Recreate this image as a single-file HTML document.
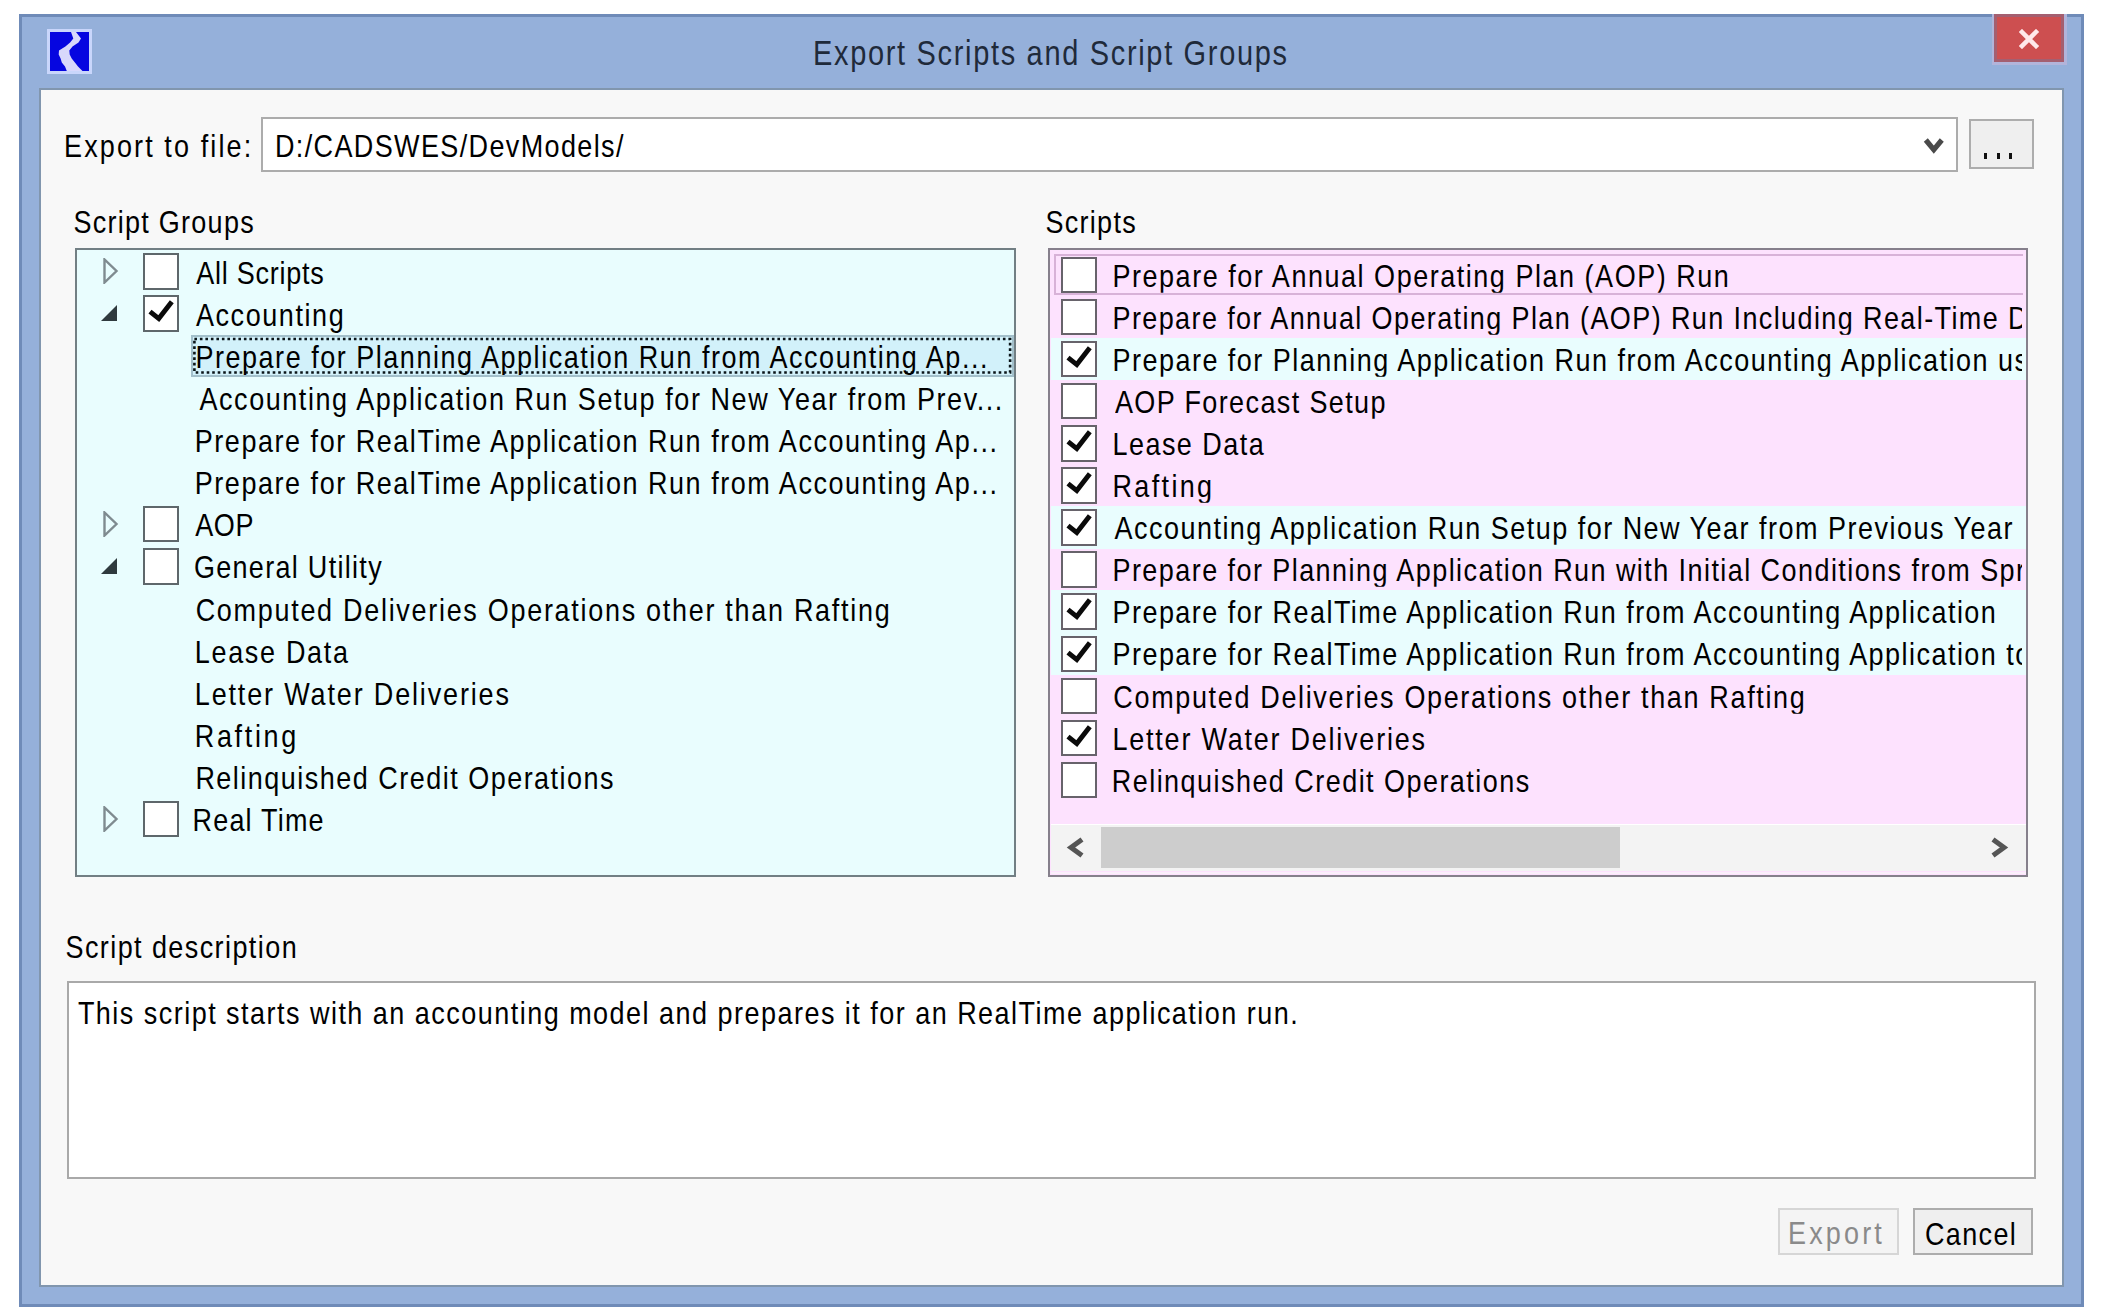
<!DOCTYPE html>
<html><head><meta charset="utf-8"><title>Export Scripts and Script Groups</title>
<style>
html,body{margin:0;padding:0;background:#ffffff;}
body{width:2104px;height:1313px;position:relative;overflow:hidden;font-family:"Liberation Sans", sans-serif;}
.a{position:absolute;}
.t{position:absolute;white-space:nowrap;font-family:"Liberation Sans", sans-serif;}
</style></head><body>
<div class="a" style="left:19.0px;top:14.0px;width:2065.0px;height:1293.0px;background:#95b0da;border:3px solid #6f8bb8;box-sizing:border-box;"></div>
<div class="a" style="left:47.0px;top:29.0px;width:45.0px;height:45.0px;background:#c9d6fb;"></div>
<div class="a" style="left:50.0px;top:31.5px;width:39.0px;height:39.5px;background:#0606e0;"></div>
<svg class="a" style="left:50px;top:31.5px" width="39" height="39.5" viewBox="0 0 39 39.5"><path d="M21 0 L26 0 L31 6.5 L28.5 10.5 L22.5 14.5 L19.3 18.5 L19.7 22.5 L21.7 26.5 L24.9 30.5 L28 34.5 L33 39.5 L17 39.5 L15 34.5 L11.8 30.5 L10.6 26.5 L8.7 22.5 L9 18.5 L15.4 14.5 L20.1 10.5 L23.3 6.5 Z" fill="#d8d8fb"/></svg>
<div class="t" style="left:813.02px;top:40.75px;font-size:29px;line-height:29px;color:#1f2a3a;letter-spacing:1.669px;transform:scaleY(1.1929);transform-origin:0 24.55px;">Export Scripts and Script Groups</div>
<div class="a" style="left:1991.5px;top:14.0px;width:75.3px;height:50.5px;background:#b2b4da;"></div>
<div class="a" style="left:1994.0px;top:14.0px;width:70.2px;height:48.0px;background:#cd4f50;border:3px solid #a45f70;box-sizing:border-box;"></div>
<svg class="a" style="left:2019px;top:29px" width="20" height="20" viewBox="0 0 20 20"><path d="M3 3 L17 17 M17 3 L3 17" stroke="#ffe8ea" stroke-width="4.5" stroke-linecap="square"/></svg>
<div class="a" style="left:39.0px;top:88.0px;width:2025.0px;height:1199.0px;background:#f8f8f8;border:2.3px solid #8196ae;box-sizing:border-box;"></div>
<div class="t" style="left:64.09px;top:135.24px;font-size:27px;line-height:27px;color:#000;letter-spacing:2.107px;transform:scaleY(1.1843);transform-origin:0 22.86px;">Export to file:</div>
<div class="a" style="left:261.0px;top:116.5px;width:1696.5px;height:55.5px;background:#ffffff;border:2.5px solid #acacac;box-sizing:border-box;"></div>
<div class="t" style="left:274.99px;top:135.24px;font-size:27px;line-height:27px;color:#000;letter-spacing:1.367px;transform:scaleY(1.1843);transform-origin:0 22.86px;">D:/CADSWES/DevModels/</div>
<svg class="a" style="left:1923px;top:137px" width="22" height="19" viewBox="0 0 22 19"><path d="M2.8 3 L10.8 12.6 L18.8 3" stroke="#4a4a4a" stroke-width="5.2" fill="none"/></svg>
<div class="a" style="left:1969.0px;top:119.0px;width:64.5px;height:50.0px;background:#efefef;border:2.5px solid #adadad;box-sizing:border-box;"></div>
<div class="a" style="left:1984.0px;top:152.5px;width:3.0px;height:6.0px;background:#111;"></div>
<div class="a" style="left:1996.5px;top:152.5px;width:3.0px;height:6.0px;background:#111;"></div>
<div class="a" style="left:2009.0px;top:152.5px;width:3.0px;height:6.0px;background:#111;"></div>
<div class="t" style="left:73.57px;top:210.94px;font-size:27px;line-height:27px;color:#000;letter-spacing:1.253px;transform:scaleY(1.1843);transform-origin:0 22.86px;">Script Groups</div>
<div class="t" style="left:1045.57px;top:211.24px;font-size:27px;line-height:27px;color:#000;letter-spacing:1.262px;transform:scaleY(1.1843);transform-origin:0 22.86px;">Scripts</div>
<div class="a" style="left:75.0px;top:247.7px;width:941.0px;height:629.3px;background:#e9fdfe;border:2.5px solid #727f84;box-sizing:border-box;"></div>
<div class="a" style="left:190.5px;top:335.0px;width:823.2px;height:41.7px;background:#d2f1fa;border:2.5px solid #a3c0cb;box-sizing:border-box;"></div>
<svg class="a" style="left:190px;top:335px" width="824" height="42" viewBox="0 0 824 42"><rect x="4.4" y="4.05" width="815.7" height="33.5" fill="none" stroke="#0a1418" stroke-width="2.6" stroke-dasharray="2.6 2.9"/></svg>
<svg class="a" style="left:102px;top:258.3px" width="18" height="26" viewBox="0 0 18 26"><path d="M2.5 1.5 L2.5 24.5 L14.5 13 Z" stroke="#7f8b90" stroke-width="2.4" fill="none"/></svg>
<div class="a" style="left:142.8px;top:253.3px;width:36.0px;height:36.5px;background:#ffffff;border:2.6px solid #5e676b;box-sizing:border-box;"></div>
<div class="t" style="left:196.15px;top:261.74px;font-size:27px;line-height:27px;color:#000;letter-spacing:0.750px;transform:scaleY(1.1843);transform-origin:0 22.86px;">All Scripts</div>
<svg class="a" style="left:100px;top:303.9px" width="18" height="18" viewBox="0 0 18 18"><path d="M1 17 L17 17 L17 1 Z" fill="#2f3a3e"/></svg>
<div class="a" style="left:142.8px;top:295.4px;width:36.0px;height:36.5px;background:#ffffff;border:2.6px solid #5e676b;box-sizing:border-box;"></div>
<svg class="a" style="left:142.8px;top:295.4px" width="36" height="36" viewBox="0 0 36 36"><path d="M7 16.6 L15.8 23.6 L28.8 6.8" stroke="#0a0a0a" stroke-width="4.9" fill="none" stroke-linejoin="miter" stroke-linecap="butt"/></svg>
<div class="t" style="left:195.95px;top:303.84px;font-size:27px;line-height:27px;color:#000;letter-spacing:1.578px;transform:scaleY(1.1843);transform-origin:0 22.86px;">Accounting</div>
<div class="t" style="left:195.49px;top:345.94px;font-size:27px;line-height:27px;color:#000;letter-spacing:1.518px;transform:scaleY(1.1843);transform-origin:0 22.86px;">Prepare for Planning Application Run from Accounting Ap...</div>
<div class="t" style="left:199.45px;top:388.04px;font-size:27px;line-height:27px;color:#000;letter-spacing:1.562px;transform:scaleY(1.1843);transform-origin:0 22.86px;">Accounting Application Run Setup for New Year from Prev...</div>
<div class="t" style="left:194.79px;top:430.14px;font-size:27px;line-height:27px;color:#000;letter-spacing:1.532px;transform:scaleY(1.1843);transform-origin:0 22.86px;">Prepare for RealTime Application Run from Accounting Ap...</div>
<div class="t" style="left:194.79px;top:472.24px;font-size:27px;line-height:27px;color:#000;letter-spacing:1.532px;transform:scaleY(1.1843);transform-origin:0 22.86px;">Prepare for RealTime Application Run from Accounting Ap...</div>
<svg class="a" style="left:102px;top:510.9px" width="18" height="26" viewBox="0 0 18 26"><path d="M2.5 1.5 L2.5 24.5 L14.5 13 Z" stroke="#7f8b90" stroke-width="2.4" fill="none"/></svg>
<div class="a" style="left:142.8px;top:505.9px;width:36.0px;height:36.5px;background:#ffffff;border:2.6px solid #5e676b;box-sizing:border-box;"></div>
<div class="t" style="left:195.25px;top:514.34px;font-size:27px;line-height:27px;color:#000;letter-spacing:0.573px;transform:scaleY(1.1843);transform-origin:0 22.86px;">AOP</div>
<svg class="a" style="left:100px;top:556.5px" width="18" height="18" viewBox="0 0 18 18"><path d="M1 17 L17 17 L17 1 Z" fill="#2f3a3e"/></svg>
<div class="a" style="left:142.8px;top:548.0px;width:36.0px;height:36.5px;background:#ffffff;border:2.6px solid #5e676b;box-sizing:border-box;"></div>
<div class="t" style="left:193.94px;top:556.44px;font-size:27px;line-height:27px;color:#000;letter-spacing:1.296px;transform:scaleY(1.1843);transform-origin:0 22.86px;">General Utility</div>
<div class="t" style="left:195.63px;top:598.54px;font-size:27px;line-height:27px;color:#000;letter-spacing:1.702px;transform:scaleY(1.1843);transform-origin:0 22.86px;">Computed Deliveries Operations other than Rafting</div>
<div class="t" style="left:194.79px;top:640.64px;font-size:27px;line-height:27px;color:#000;letter-spacing:1.678px;transform:scaleY(1.1843);transform-origin:0 22.86px;">Lease Data</div>
<div class="t" style="left:194.79px;top:682.74px;font-size:27px;line-height:27px;color:#000;letter-spacing:1.845px;transform:scaleY(1.1843);transform-origin:0 22.86px;">Letter Water Deliveries</div>
<div class="t" style="left:194.79px;top:724.84px;font-size:27px;line-height:27px;color:#000;letter-spacing:2.649px;transform:scaleY(1.1843);transform-origin:0 22.86px;">Rafting</div>
<div class="t" style="left:195.39px;top:766.94px;font-size:27px;line-height:27px;color:#000;letter-spacing:1.482px;transform:scaleY(1.1843);transform-origin:0 22.86px;">Relinquished Credit Operations</div>
<svg class="a" style="left:102px;top:805.6px" width="18" height="26" viewBox="0 0 18 26"><path d="M2.5 1.5 L2.5 24.5 L14.5 13 Z" stroke="#7f8b90" stroke-width="2.4" fill="none"/></svg>
<div class="a" style="left:142.8px;top:800.6px;width:36.0px;height:36.5px;background:#ffffff;border:2.6px solid #5e676b;box-sizing:border-box;"></div>
<div class="t" style="left:192.49px;top:809.04px;font-size:27px;line-height:27px;color:#000;letter-spacing:1.196px;transform:scaleY(1.1843);transform-origin:0 22.86px;">Real Time</div>
<div class="a" style="left:1047.5px;top:248.0px;width:980.5px;height:629.0px;background:#fde2fe;border:2.6px solid #86808c;box-sizing:border-box;"></div>
<div class="a" style="left:1053.5px;top:253.6px;width:969.0px;height:41.1px;border:2.2px solid #d8b2d8;box-sizing:border-box;border-right:0;"></div>
<div class="a" style="left:1061.2px;top:256.6px;width:36.0px;height:36.5px;background:#ffffff;border:2.6px solid #67636b;box-sizing:border-box;"></div>
<div class="t" style="left:1112.49px;top:264.54px;font-size:27px;line-height:27px;color:#000;letter-spacing:1.525px;transform:scaleY(1.1843);transform-origin:0 22.86px;width:910.0px;overflow:hidden;">Prepare for Annual Operating Plan (AOP) Run</div>
<div class="a" style="left:1061.2px;top:298.7px;width:36.0px;height:36.5px;background:#ffffff;border:2.6px solid #67636b;box-sizing:border-box;"></div>
<div class="t" style="left:1112.49px;top:306.64px;font-size:27px;line-height:27px;color:#000;letter-spacing:1.392px;transform:scaleY(1.1843);transform-origin:0 22.86px;width:910.0px;overflow:hidden;">Prepare for Annual Operating Plan (AOP) Run Including Real-Time Data</div>
<div class="a" style="left:1050.5px;top:337.8px;width:975.0px;height:42.7px;background:#e9fdfe;"></div>
<div class="a" style="left:1061.2px;top:340.8px;width:36.0px;height:36.5px;background:#ffffff;border:2.6px solid #67636b;box-sizing:border-box;"></div>
<svg class="a" style="left:1061.2px;top:340.8px" width="36" height="36" viewBox="0 0 36 36"><path d="M7 16.6 L15.8 23.6 L28.8 6.8" stroke="#0a0a0a" stroke-width="4.9" fill="none" stroke-linejoin="miter" stroke-linecap="butt"/></svg>
<div class="t" style="left:1112.49px;top:348.74px;font-size:27px;line-height:27px;color:#000;letter-spacing:1.477px;transform:scaleY(1.1843);transform-origin:0 22.86px;width:910.0px;overflow:hidden;">Prepare for Planning Application Run from Accounting Application using</div>
<div class="a" style="left:1061.2px;top:382.9px;width:36.0px;height:36.5px;background:#ffffff;border:2.6px solid #67636b;box-sizing:border-box;"></div>
<div class="t" style="left:1114.95px;top:390.84px;font-size:27px;line-height:27px;color:#000;letter-spacing:1.379px;transform:scaleY(1.1843);transform-origin:0 22.86px;width:907.6px;overflow:hidden;">AOP Forecast Setup</div>
<div class="a" style="left:1061.2px;top:425.0px;width:36.0px;height:36.5px;background:#ffffff;border:2.6px solid #67636b;box-sizing:border-box;"></div>
<svg class="a" style="left:1061.2px;top:425.0px" width="36" height="36" viewBox="0 0 36 36"><path d="M7 16.6 L15.8 23.6 L28.8 6.8" stroke="#0a0a0a" stroke-width="4.9" fill="none" stroke-linejoin="miter" stroke-linecap="butt"/></svg>
<div class="t" style="left:1112.49px;top:432.94px;font-size:27px;line-height:27px;color:#000;letter-spacing:1.456px;transform:scaleY(1.1843);transform-origin:0 22.86px;width:910.0px;overflow:hidden;">Lease Data</div>
<div class="a" style="left:1061.2px;top:467.1px;width:36.0px;height:36.5px;background:#ffffff;border:2.6px solid #67636b;box-sizing:border-box;"></div>
<svg class="a" style="left:1061.2px;top:467.1px" width="36" height="36" viewBox="0 0 36 36"><path d="M7 16.6 L15.8 23.6 L28.8 6.8" stroke="#0a0a0a" stroke-width="4.9" fill="none" stroke-linejoin="miter" stroke-linecap="butt"/></svg>
<div class="t" style="left:1112.49px;top:475.04px;font-size:27px;line-height:27px;color:#000;letter-spacing:2.349px;transform:scaleY(1.1843);transform-origin:0 22.86px;width:910.0px;overflow:hidden;">Rafting</div>
<div class="a" style="left:1050.5px;top:506.2px;width:975.0px;height:42.7px;background:#e9fdfe;"></div>
<div class="a" style="left:1061.2px;top:509.2px;width:36.0px;height:36.5px;background:#ffffff;border:2.6px solid #67636b;box-sizing:border-box;"></div>
<svg class="a" style="left:1061.2px;top:509.2px" width="36" height="36" viewBox="0 0 36 36"><path d="M7 16.6 L15.8 23.6 L28.8 6.8" stroke="#0a0a0a" stroke-width="4.9" fill="none" stroke-linejoin="miter" stroke-linecap="butt"/></svg>
<div class="t" style="left:1114.45px;top:517.14px;font-size:27px;line-height:27px;color:#000;letter-spacing:1.484px;transform:scaleY(1.1843);transform-origin:0 22.86px;width:908.1px;overflow:hidden;">Accounting Application Run Setup for New Year from Previous Year</div>
<div class="a" style="left:1061.2px;top:551.3px;width:36.0px;height:36.5px;background:#ffffff;border:2.6px solid #67636b;box-sizing:border-box;"></div>
<div class="t" style="left:1112.49px;top:559.24px;font-size:27px;line-height:27px;color:#000;letter-spacing:1.436px;transform:scaleY(1.1843);transform-origin:0 22.86px;width:910.0px;overflow:hidden;">Prepare for Planning Application Run with Initial Conditions from Spreadsheet</div>
<div class="a" style="left:1050.5px;top:590.4px;width:975.0px;height:42.7px;background:#e9fdfe;"></div>
<div class="a" style="left:1061.2px;top:593.4px;width:36.0px;height:36.5px;background:#ffffff;border:2.6px solid #67636b;box-sizing:border-box;"></div>
<svg class="a" style="left:1061.2px;top:593.4px" width="36" height="36" viewBox="0 0 36 36"><path d="M7 16.6 L15.8 23.6 L28.8 6.8" stroke="#0a0a0a" stroke-width="4.9" fill="none" stroke-linejoin="miter" stroke-linecap="butt"/></svg>
<div class="t" style="left:1112.49px;top:601.34px;font-size:27px;line-height:27px;color:#000;letter-spacing:1.459px;transform:scaleY(1.1843);transform-origin:0 22.86px;width:910.0px;overflow:hidden;">Prepare for RealTime Application Run from Accounting Application</div>
<div class="a" style="left:1050.5px;top:632.5px;width:975.0px;height:42.7px;background:#e9fdfe;"></div>
<div class="a" style="left:1061.2px;top:635.5px;width:36.0px;height:36.5px;background:#ffffff;border:2.6px solid #67636b;box-sizing:border-box;"></div>
<svg class="a" style="left:1061.2px;top:635.5px" width="36" height="36" viewBox="0 0 36 36"><path d="M7 16.6 L15.8 23.6 L28.8 6.8" stroke="#0a0a0a" stroke-width="4.9" fill="none" stroke-linejoin="miter" stroke-linecap="butt"/></svg>
<div class="t" style="left:1112.49px;top:643.44px;font-size:27px;line-height:27px;color:#000;letter-spacing:1.459px;transform:scaleY(1.1843);transform-origin:0 22.86px;width:910.0px;overflow:hidden;">Prepare for RealTime Application Run from Accounting Application to</div>
<div class="a" style="left:1061.2px;top:677.6px;width:36.0px;height:36.5px;background:#ffffff;border:2.6px solid #67636b;box-sizing:border-box;"></div>
<div class="t" style="left:1113.33px;top:685.54px;font-size:27px;line-height:27px;color:#000;letter-spacing:1.648px;transform:scaleY(1.1843);transform-origin:0 22.86px;width:909.2px;overflow:hidden;">Computed Deliveries Operations other than Rafting</div>
<div class="a" style="left:1061.2px;top:719.7px;width:36.0px;height:36.5px;background:#ffffff;border:2.6px solid #67636b;box-sizing:border-box;"></div>
<svg class="a" style="left:1061.2px;top:719.7px" width="36" height="36" viewBox="0 0 36 36"><path d="M7 16.6 L15.8 23.6 L28.8 6.8" stroke="#0a0a0a" stroke-width="4.9" fill="none" stroke-linejoin="miter" stroke-linecap="butt"/></svg>
<div class="t" style="left:1112.49px;top:727.64px;font-size:27px;line-height:27px;color:#000;letter-spacing:1.768px;transform:scaleY(1.1843);transform-origin:0 22.86px;width:910.0px;overflow:hidden;">Letter Water Deliveries</div>
<div class="a" style="left:1061.2px;top:761.8px;width:36.0px;height:36.5px;background:#ffffff;border:2.6px solid #67636b;box-sizing:border-box;"></div>
<div class="t" style="left:1111.79px;top:769.74px;font-size:27px;line-height:27px;color:#000;letter-spacing:1.454px;transform:scaleY(1.1843);transform-origin:0 22.86px;width:910.7px;overflow:hidden;">Relinquished Credit Operations</div>
<div class="a" style="left:1050.5px;top:823.6px;width:975.0px;height:1.6px;background:#ffffff;"></div>
<div class="a" style="left:1050.5px;top:825.2px;width:975.0px;height:46.3px;background:#f3f3f3;"></div>
<div class="a" style="left:1050.5px;top:871.5px;width:975.0px;height:2.8px;background:#fbeffb;"></div>
<div class="a" style="left:1100.8px;top:826.7px;width:519.6px;height:41.1px;background:#cdcdcd;"></div>
<svg class="a" style="left:1066px;top:837px" width="19" height="21" viewBox="0 0 19 21"><path d="M16 2.5 L5 10.5 L16 18.5" stroke="#555" stroke-width="5" fill="none"/></svg>
<svg class="a" style="left:1990px;top:837px" width="19" height="21" viewBox="0 0 19 21"><path d="M3 2.5 L14 10.5 L3 18.5" stroke="#555" stroke-width="5" fill="none"/></svg>
<div class="t" style="left:65.47px;top:935.74px;font-size:27px;line-height:27px;color:#000;letter-spacing:1.417px;transform:scaleY(1.1843);transform-origin:0 22.86px;">Script description</div>
<div class="a" style="left:67.0px;top:980.7px;width:1969.0px;height:198.8px;background:#ffffff;border:2.5px solid #a9a9a9;box-sizing:border-box;"></div>
<div class="t" style="left:77.89px;top:1002.34px;font-size:27px;line-height:27px;color:#000;letter-spacing:1.476px;transform:scaleY(1.1843);transform-origin:0 22.86px;">This script starts with an accounting model and prepares it for an RealTime application run.</div>
<div class="a" style="left:1778.0px;top:1208.2px;width:120.5px;height:47.1px;background:#f4f4f4;border:2.5px solid #d6d6d6;box-sizing:border-box;"></div>
<div class="t" style="left:1787.99px;top:1222.04px;font-size:27px;line-height:27px;color:#8a8a8a;letter-spacing:3.153px;transform:scaleY(1.1843);transform-origin:0 22.86px;">Export</div>
<div class="a" style="left:1913.2px;top:1208.4px;width:119.8px;height:47.1px;background:#efefef;border:2.5px solid #adadad;box-sizing:border-box;"></div>
<div class="t" style="left:1924.93px;top:1222.54px;font-size:27px;line-height:27px;color:#000;letter-spacing:1.366px;transform:scaleY(1.1843);transform-origin:0 22.86px;">Cancel</div>
</body></html>
